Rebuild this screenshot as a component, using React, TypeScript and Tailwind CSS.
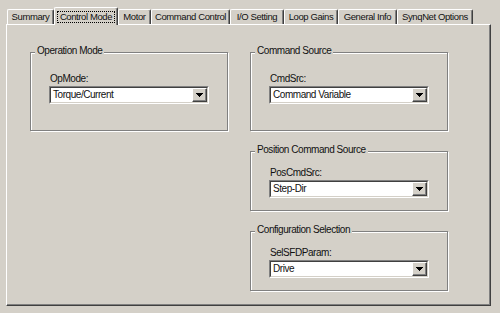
import React from 'react';

type Tab = { label: string; width: string; active?: boolean };

const tabs: Tab[] = [
  { label: 'Summary', width: 'w-[47px]' },
  { label: 'Control Mode', width: 'w-[64px]', active: true },
  { label: 'Motor', width: 'w-[33px]' },
  { label: 'Command Control', width: 'w-[79px]' },
  { label: 'I/O Setting', width: 'w-[54px]' },
  { label: 'Loop Gains', width: 'w-[54px]' },
  { label: 'General Info', width: 'w-[59px]' },
  { label: 'SynqNet Options', width: 'w-[76px]' },
];

const Combo: React.FC<{ value: string }> = ({ value }) => (
  <div className="ml-[18px] mt-[1px] w-[160px] h-[18px] border border-t-[#808080] border-l-[#808080] border-r-white border-b-white">
    <div className="h-full flex items-stretch bg-white border border-t-[#404040] border-l-[#404040] border-r-[#d4d0c8] border-b-[#d4d0c8]">
      <span className="flex-1 pl-[2px] leading-[14px] whitespace-nowrap">{value}</span>
      <div className="w-[15px] flex items-center justify-center bg-[#d4d0c8] border border-t-white border-l-white border-r-[#404040] border-b-[#404040] shadow-[inset_-1px_-1px_0_#808080]">
        <svg width="7" height="4" viewBox="0 0 7 4" shapeRendering="crispEdges">
          <path d="M0 0h7v1H0zM1 1h5v1H1zM2 2h3v1H2zM3 3h1v1H3z" fill="#000" />
        </svg>
      </div>
    </div>
  </div>
);

interface GroupProps {
  title: string;
  label: string;
  value: string;
  height: string;
  padTop: string;
}

const Group: React.FC<GroupProps> = ({ title, label, value, height, padTop }) => (
  <div className={`relative w-[198px] ${height} ${padTop} border border-[#808080] shadow-[1px_1px_0_#fff,inset_1px_1px_0_#fff]`}>
    <span className="absolute left-[4px] top-[-8px] px-[2px] h-[12px] leading-[12px] bg-[#d4d0c8] whitespace-nowrap">
      {title}
    </span>
    <div className="ml-[19px] h-[12px] leading-[12px]">{label}</div>
    <Combo value={value} />
  </div>
);

export default function App() {
  return (
    <div className="w-[500px] h-[313px] bg-[#d4d0c8] pt-[7px] text-[#111] text-[10px] tracking-[-0.45px] font-['Liberation_Sans',Arial,sans-serif] overflow-hidden">
      {/* Tabs */}
      <div className="flex items-end h-[17px] pl-[7px] text-[9.5px] tracking-[-0.4px]">
        {tabs.map((t) =>
          t.active ? (
            <div
              key={t.label}
              className={`${t.width} relative z-10 h-[18px] -mb-[1px] bg-[#d4d0c8] rounded-t-[2px] border-t border-l border-r border-t-white border-l-white border-r-[#404040] shadow-[inset_-1px_0_0_#808080] flex items-center justify-center`}
            >
              <span className="px-[2px] h-[12px] leading-[10px] border border-dotted border-black whitespace-nowrap">
                {t.label}
              </span>
            </div>
          ) : (
            <div
              key={t.label}
              className={`${t.width} h-[15px] rounded-t-[2px] border-t border-l border-r border-t-white border-l-white border-r-[#404040] shadow-[inset_-1px_0_0_#808080] flex items-center justify-center leading-[12px] whitespace-nowrap`}
            >
              {t.label}
            </div>
          )
        )}
      </div>

      {/* Panel */}
      <div className="ml-[6px] w-[485px] h-[282px] border border-t-white border-l-white border-r-[#404040] border-b-[#404040] shadow-[inset_-1px_-1px_0_#808080] pl-[23px] pt-[27px] flex items-start gap-[22px]">
        <Group title="Operation Mode" label="OpMode:" value="Torque/Current" height="h-[79px]" padTop="pt-[20px]" />
        <div className="flex flex-col gap-[20px]">
          <Group title="Command Source" label="CmdSrc:" value="Command Variable" height="h-[79px]" padTop="pt-[20px]" />
          <Group title="Position Command Source" label="PosCmdSrc:" value="Step-Dir" height="h-[60px]" padTop="pt-[15px]" />
          <Group title="Configuration Selection" label="SelSFDParam:" value="Drive" height="h-[60px]" padTop="pt-[15px]" />
        </div>
      </div>
    </div>
  );
}
